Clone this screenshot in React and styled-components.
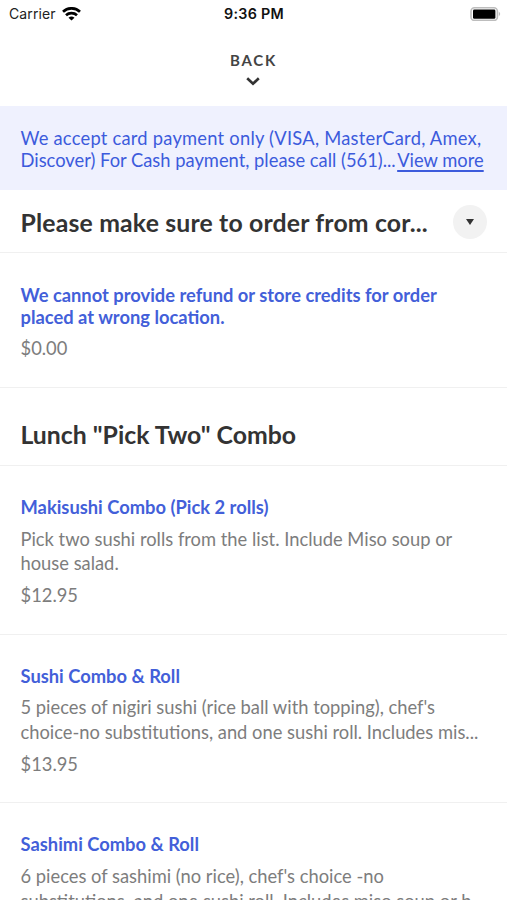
import React from 'react';
import styled, { createGlobalStyle } from 'styled-components';

const GlobalStyle = createGlobalStyle`
    * {
        box-sizing: border-box;
    }

    body {
        margin: 0;
        background-color: #fff;
        font-family: Lato, sans-serif;
    }
`;

const Screen = styled.div`
    width: 507px;
    height: 900px;
    overflow: hidden;
    background-color: #fff;
`;

const StatusBar = styled.div`
    height: 27px;
    padding: 0 6px 0 9px;
    display: grid;
    grid-template-columns: 1fr auto 1fr;
    align-items: center;
    font-family: Inter, sans-serif;
    font-size: 14px;
    color: #222;
`;

const Carrier = styled.div`
    display: flex;
    align-items: center;
    gap: 6px;
    letter-spacing: 0.1px;
`;

const Time = styled.div`
    margin-right: 2px;
    font-size: 14.3px;
    font-weight: 600;
    letter-spacing: 0.3px;
    color: #111;
`;

const Battery = styled.svg`
    justify-self: end;
`;

const BackBar = styled.div`
    height: 79px;
    padding-top: 24px;
    display: flex;
    flex-direction: column;
    align-items: center;
    gap: 8px;
`;

const BackLabel = styled.div`
    font-size: 15px;
    line-height: 18px;
    font-weight: 700;
    letter-spacing: 1.8px;
    color: #444;
`;

const Chevron = styled.svg`
    margin-right: 1px;
`;

const Notice = styled.div`
    height: 84px;
    padding: 21px 20.5px 0;
    background-color: #eff1fe;
    color: #3c5bdc;
    font-size: 18.33px;
    line-height: 22px;
    white-space: nowrap;
`;

const NoticeLine = styled.div`
    letter-spacing: ${(props) => props.$spacing};
`;

const ViewMore = styled.span`
    margin-left: 1.5px;
    text-decoration: underline;
    text-decoration-thickness: 1.5px;
    text-underline-offset: 3px;
`;

const SectionHeader = styled.div`
    height: ${(props) => props.$height};
    padding: ${(props) => props.$padding};
    display: flex;
    align-items: center;
    justify-content: space-between;
    border-bottom: 1px solid #f0f0f0;
`;

const SectionTitle = styled.div`
    padding-top: 1px;
    font-size: 24.8px;
    line-height: 30px;
    font-weight: 700;
    letter-spacing: ${(props) => props.$spacing || 'normal'};
    color: #333;
    white-space: nowrap;
`;

const Toggle = styled.div`
    width: 34px;
    height: 34px;
    border-radius: 50%;
    background-color: #f2f2f2;
    display: flex;
    align-items: center;
    justify-content: center;
`;

const Item = styled.div`
    height: ${(props) => props.$height || '168.67px'};
    padding: ${(props) => props.$top || '30px'} 20.5px 0;
    border-bottom: 1px solid #f0f0f0;
    font-size: 18.33px;
    white-space: nowrap;
`;

const ItemName = styled.div`
    line-height: 22px;
    font-weight: 700;
    color: #435fd9;
`;

const Description = styled.div`
    margin-top: 8.8px;
    line-height: 24.5px;
    color: #7d7d7d;
`;

const Price = styled.div`
    margin-top: ${(props) => props.$gap || '7.2px'};
    line-height: 24px;
    color: #7d7d7d;
`;

const lunchItems = [
    {
        name: 'Makisushi Combo (Pick 2 rolls)',
        description: [
            'Pick two sushi rolls from the list. Include Miso soup or',
            'house salad.',
        ],
        price: '$12.95',
    },
    {
        name: 'Sushi Combo & Roll',
        description: [
            "5 pieces of nigiri sushi (rice ball with topping), chef's",
            'choice-no substitutions, and one sushi roll. Includes mis...',
        ],
        price: '$13.95',
    },
    {
        name: 'Sashimi Combo & Roll',
        description: [
            "6 pieces of sashimi (no rice), chef's choice -no",
            'substitutions, and one sushi roll. Includes miso soup or h...',
        ],
    },
];

const App = () => {
    return (
        <Screen>
            <GlobalStyle />
            <StatusBar>
                <Carrier>
                    <span>Carrier</span>
                    <svg width='19' height='14' viewBox='0 0 19 14'>
                        <g fill='none' stroke='#000' strokeWidth='2.7'>
                            <path d='M1 4.7C5.8 .2 13.2 .2 18 4.7' />
                            <path d='M4 8.2C7 5.4 12 5.4 15 8.2' />
                        </g>
                        <path d='M9.5 13.6L6.5 10.8Q9.5 8.2 12.5 10.8Z' />
                    </svg>
                </Carrier>
                <Time>9:36 PM</Time>
                <Battery width='31' height='14' viewBox='0 0 31 14'>
                    <rect x='1' y='.8' width='26.4' height='12.6' rx='3.5' fill='#fff' stroke='#bdbdbd' strokeWidth='1.6' />
                    <rect x='3' y='2.4' width='22.4' height='9.4' rx='1.3' />
                    <path d='M28.8 4.8Q31.6 7 28.8 9.2Z' fill='#bdbdbd' />
                </Battery>
            </StatusBar>
            <BackBar>
                <BackLabel>BACK</BackLabel>
                <Chevron width='14' height='9' viewBox='0 0 14 9'>
                    <path d='M1.2 1.2L7 6.8L12.8 1.2' fill='none' stroke='#333' strokeWidth='2.6' />
                </Chevron>
            </BackBar>
            <Notice>
                <NoticeLine $spacing='0.23px'>
                    We accept card payment only (VISA, MasterCard, Amex,
                </NoticeLine>
                <NoticeLine $spacing='0'>
                    Discover) For Cash payment, please call (561)...
                    <ViewMore>View more</ViewMore>
                </NoticeLine>
            </Notice>
            <SectionHeader $height='63px' $padding='2px 20px 0 20.5px'>
                <SectionTitle $spacing='0.17px'>Please make sure to order from cor...</SectionTitle>
                <Toggle>
                    <svg width='8' height='6' viewBox='0 0 8 6'>
                        <path d='M0 0H8L4 6Z' fill='#333' />
                    </svg>
                </Toggle>
            </SectionHeader>
            <Item $height='135px' $top='31px'>
                <ItemName>We cannot provide refund or store credits for order</ItemName>
                <ItemName>placed at wrong location.</ItemName>
                <Price $gap='7.5px'>$0.00</Price>
            </Item>
            <SectionHeader $height='78px' $padding='16px 20.5px 0'>
                <SectionTitle>Lunch "Pick Two" Combo</SectionTitle>
            </SectionHeader>
            {lunchItems.map((item) => (
                <Item key={item.name}>
                    <ItemName>{item.name}</ItemName>
                    <Description>
                        {item.description.map((line) => (
                            <div key={line}>{line}</div>
                        ))}
                    </Description>
                    {item.price && <Price>{item.price}</Price>}
                </Item>
            ))}
        </Screen>
    );
};

export default App;
